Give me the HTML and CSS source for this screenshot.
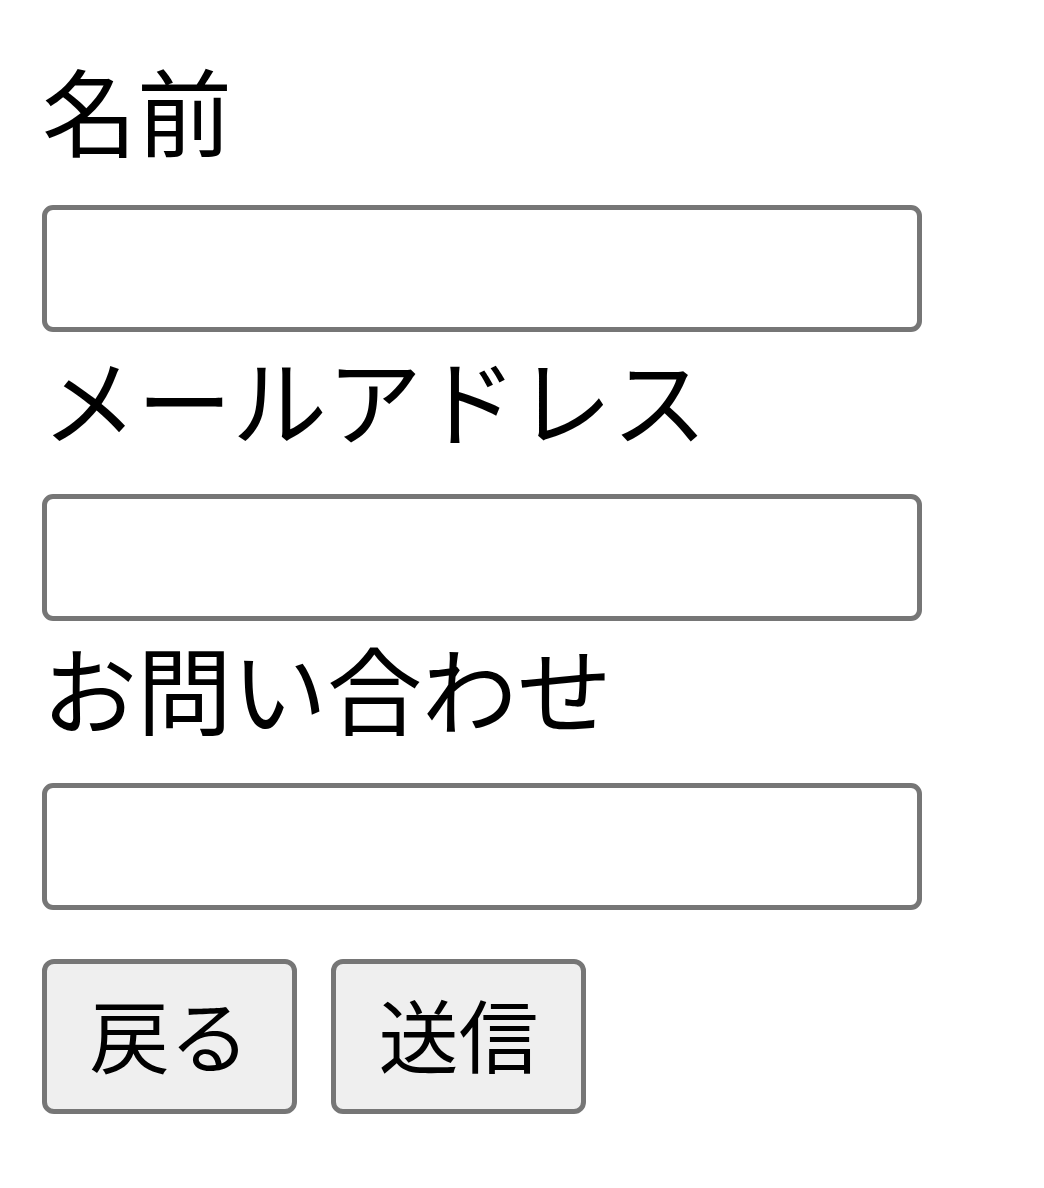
FILE: index.html
```html
<!DOCTYPE html>
<html lang="ja">
<head>
<meta charset="utf-8">
<link rel="stylesheet" href="styles.css">
</head>
<body>
<form class="form">
  <label class="label">名前</label>
  <input class="field" type="text">
  <label class="label">メールアドレス</label>
  <input class="field" type="email">
  <label class="label">お問い合わせ</label>
  <input class="field" type="text">
  <div class="actions">
    <button class="btn" type="button">戻る</button>
    <button class="btn" type="submit">送信</button>
  </div>
</form>
</body>
</html>
```
FILE: styles.css
```css
html, body {
  margin: 0;
  padding: 0;
  background: #ffffff;
}
body {
  padding: 43px 0 0 42px;
  font-family: "Noto Sans CJK JP", "Noto Sans", sans-serif;
  color: #000000;
}
.form {
  display: flex;
  flex-direction: column;
  align-items: flex-start;
}
.label {
  display: block;
  box-sizing: border-box;
  height: 162px;
  padding-bottom: 30px;
  font-size: 95px;
  line-height: 132px;
}
.field {
  box-sizing: border-box;
  width: 880px;
  height: 127px;
  margin: 0;
  border: 5px solid #767676;
  border-radius: 11px;
  background: #ffffff;
  font-size: 72px;
  padding: 0 10px;
}
.actions {
  display: flex;
  gap: 34px;
  margin-top: 49px;
}
.btn {
  box-sizing: border-box;
  width: 255px;
  height: 155px;
  margin: 0;
  padding: 0 0 9px;
  border: 5px solid #767676;
  border-radius: 12px;
  background: #efefef;
  color: #000000;
  font-family: "Noto Sans CJK JP", "Noto Sans", sans-serif;
  font-size: 80px;
  line-height: 1;
}
```
